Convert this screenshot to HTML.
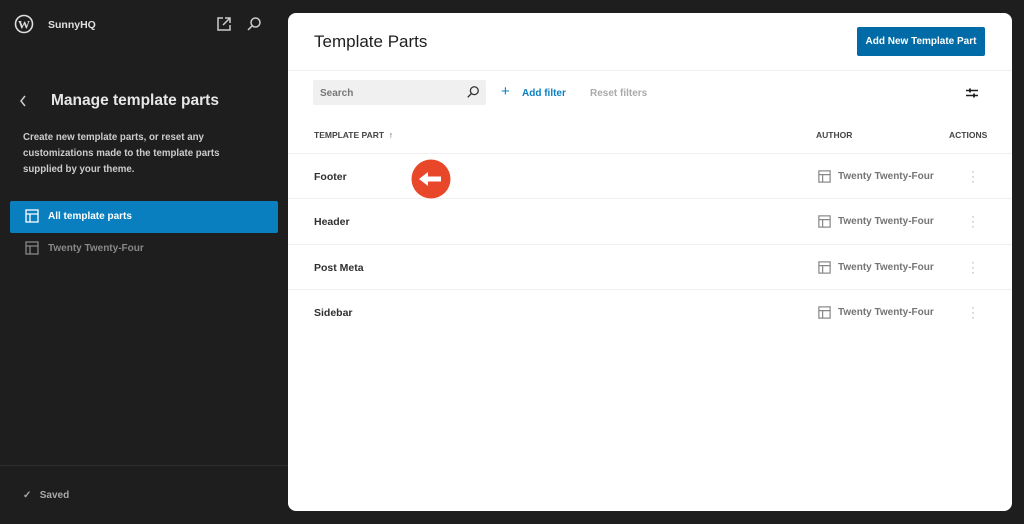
<!DOCTYPE html>
<html><head><style>
*{box-sizing:border-box;margin:0;padding:0}
body{width:1024px;height:524px;background:#1e1e1e;font-family:"Liberation Sans",Arial,sans-serif;position:relative;overflow:hidden;color:#1e1e1e}
.a{position:absolute}
.side{color:#e0e0e0}
.panel{left:288px;top:13px;width:724px;height:498px;background:#fff;border-radius:8px;overflow:hidden}
.row{position:absolute;left:0;width:724px;height:46px;border-top:1px solid #f0f0f0}
.row .n{position:absolute;left:26px;top:17px;font-size:10.5px;font-weight:bold;color:#2f2f2f}
.row .au{position:absolute;left:550px;top:17px;font-size:10px;font-weight:bold;color:#757575}
.row .dots{position:absolute;left:683px;top:15px;color:#aaa;font-size:12px;line-height:5px;width:4px;text-align:center}
</style></head><body>
<svg class="a" style="left:14px;top:14px" width="20" height="20" viewBox="0 0 20 20"><circle cx="10" cy="10" r="8.5" fill="none" stroke="#ddd" stroke-width="1.6"/><text x="10" y="14.5" font-size="12" font-weight="bold" fill="#ddd" text-anchor="middle" font-family="Liberation Serif">W</text></svg>
<div class="a side" style="left:48px;top:19px;font-size:10.5px;font-weight:bold">SunnyHQ</div>
<svg class="a" style="left:216px;top:16px" width="16" height="16" viewBox="0 0 16 16" fill="none" stroke="#ccc" stroke-width="1.5"><path d="M7 2H2v12h12V9M9 2h5v5M14 2L7 9"/></svg>
<svg class="a" style="left:246px;top:16px" width="16" height="16" viewBox="0 0 16 16" fill="none" stroke="#ccc" stroke-width="1.5"><circle cx="9.5" cy="6.5" r="4.5"/><path d="M6.3 9.7L2 14"/></svg>
<svg class="a" style="left:18px;top:94px" width="10" height="14" viewBox="0 0 10 14" fill="none" stroke="#ccc" stroke-width="1.5"><path d="M7 2L3 7l4 5"/></svg>
<div class="a side" style="left:51px;top:92px;font-size:15.5px;font-weight:bold;color:#e6e6e6">Manage template parts</div>
<div class="a" style="left:23px;top:130px;font-size:9.7px;font-weight:bold;color:#ccc;line-height:16px;width:230px">Create new template parts, or reset any customizations made to the template parts supplied by your theme.</div>
<div class="a" style="left:10px;top:201px;width:268px;height:32px;background:#0a7fc0;border-radius:2px"></div>
<svg class="a" style="left:24px;top:208px" width="16" height="16" viewBox="0 0 16 16" fill="none" stroke="#fff" stroke-width="1.3"><rect x="2" y="2" width="12" height="12"/><path d="M2 6h12M6 6v8"/></svg>
<div class="a" style="left:48px;top:211px;font-size:10px;font-weight:bold;color:#fff">All template parts</div>
<svg class="a" style="left:24px;top:240px" width="16" height="16" viewBox="0 0 16 16" fill="none" stroke="#888" stroke-width="1.3"><rect x="2" y="2" width="12" height="12"/><path d="M2 6h12M6 6v8"/></svg>
<div class="a" style="left:48px;top:243px;font-size:10px;font-weight:bold;color:#888">Twenty Twenty-Four</div>
<div class="a" style="left:0;top:465px;width:288px;border-top:1px solid #2f2f2f"></div>
<div class="a" style="left:23px;top:490px;font-size:10px;font-weight:bold;color:#aaa">✓&nbsp;&nbsp; Saved</div>

<div class="a panel">
<div class="a" style="left:26px;top:19px;font-size:17px;color:#1e1e1e">Template Parts</div>
<div class="a" style="left:569px;top:14px;width:128px;height:29px;background:#006ba6;border-radius:2px;color:#fff;font-size:10px;font-weight:bold;text-align:center;line-height:29px">Add New Template Part</div>
<div class="a" style="left:0;top:57px;width:724px;border-top:1px solid #f0f0f0"></div>
<div class="a" style="left:25px;top:67px;width:173px;height:25px;background:#f0f0f0;border-radius:2px"></div>
<div class="a" style="left:32px;top:75px;font-size:10px;font-weight:bold;color:#777">Search</div>
<svg class="a" style="left:178px;top:72px" width="14" height="14" viewBox="0 0 16 16" fill="none" stroke="#333" stroke-width="1.5"><circle cx="9.5" cy="6.5" r="4.5"/><path d="M6.3 9.7L2 14"/></svg>
<div class="a" style="left:213px;top:70px;font-size:15px;color:#0a7fc0">+</div>
<div class="a" style="left:234px;top:75px;font-size:10px;font-weight:bold;color:#0a7fc0">Add filter</div>
<div class="a" style="left:302px;top:75px;font-size:10px;font-weight:bold;color:#aaa">Reset filters</div>
<svg class="a" style="left:677px;top:73px" width="14" height="14" viewBox="0 0 14 14" fill="none" stroke="#1e1e1e" stroke-width="1.4"><path d="M1 4.5h12M1 9.5h12"/><path d="M5 2.5v4M9 7.5v4" stroke-width="1.8"/></svg>
<div class="a" style="left:26px;top:117px;font-size:8.5px;font-weight:bold;color:#444">TEMPLATE PART &nbsp;↑</div>
<div class="a" style="left:528px;top:117px;font-size:8.5px;font-weight:bold;color:#444">AUTHOR</div>
<div class="a" style="left:661px;top:117px;font-size:8.5px;font-weight:bold;color:#444">ACTIONS</div>
<div class="row" style="top:140px"><div class="n">Footer</div><svg class="a" style="left:529px;top:15px" width="15" height="15" viewBox="0 0 16 16" fill="none" stroke="#888" stroke-width="1.3"><rect x="2" y="2" width="12" height="12"/><path d="M2 6h12M6 6v8"/></svg><div class="au">Twenty Twenty-Four</div><div class="dots">·<br>·<br>·</div></div>
<div class="row" style="top:185px"><div class="n">Header</div><svg class="a" style="left:529px;top:15px" width="15" height="15" viewBox="0 0 16 16" fill="none" stroke="#888" stroke-width="1.3"><rect x="2" y="2" width="12" height="12"/><path d="M2 6h12M6 6v8"/></svg><div class="au">Twenty Twenty-Four</div><div class="dots">·<br>·<br>·</div></div>
<div class="row" style="top:231px"><div class="n">Post Meta</div><svg class="a" style="left:529px;top:15px" width="15" height="15" viewBox="0 0 16 16" fill="none" stroke="#888" stroke-width="1.3"><rect x="2" y="2" width="12" height="12"/><path d="M2 6h12M6 6v8"/></svg><div class="au">Twenty Twenty-Four</div><div class="dots">·<br>·<br>·</div></div>
<div class="row" style="top:276px"><div class="n">Sidebar</div><svg class="a" style="left:529px;top:15px" width="15" height="15" viewBox="0 0 16 16" fill="none" stroke="#888" stroke-width="1.3"><rect x="2" y="2" width="12" height="12"/><path d="M2 6h12M6 6v8"/></svg><div class="au">Twenty Twenty-Four</div><div class="dots">·<br>·<br>·</div></div>
<svg class="a" style="left:123px;top:146px" width="40" height="40" viewBox="0 0 40 40"><circle cx="20" cy="20" r="19.5" fill="#e8472a"/><path d="M8 20l9-7v4.5h13v5H17V27z" fill="#fff"/></svg>
</div>
</body></html>
